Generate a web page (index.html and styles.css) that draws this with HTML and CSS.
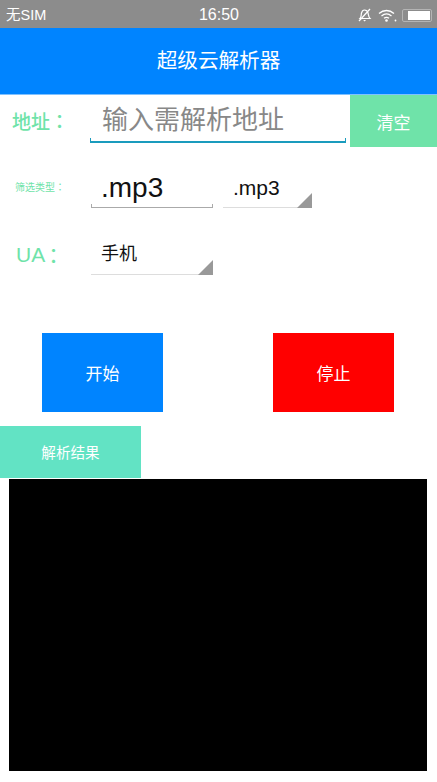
FILE: index.html
```html
<!DOCTYPE html>
<html>
	<head>
		<meta charset="UTF-8">
		<title>超级云解析器</title>
		<link rel="stylesheet" href="styles.css">
	</head>

	<body>
		<div class='status-bar'>
			<span class='carrier'>无SIM</span>
			<span class='clock'>16:50</span>
			<span class='status-icons'>
				<svg width='15' height='14' viewBox='0 0 15 14'>
					<path d='M3 10.5 C4.5 9 4 7 4.5 5 C5 3 6.5 2 7.5 2 C9 2 10.5 3 11 5 C11.5 7 11.5 9 13 10.5 Z' fill='none' stroke='#fff' stroke-width='1.2'/>
					<path d='M6.2 12 H9 L7.6 13.4 Z' fill='#fff'/>
					<path d='M2 13 L13 1' stroke='#fff' stroke-width='1.2'/>
				</svg>
				<svg class='wifi' width='19' height='13' viewBox='0 0 19 13'>
					<path d='M1 4.5 C5.5 .5 11.5 .5 16 4.5 M3.5 7 C6.5 4.5 10.5 4.5 13.5 7 M6 9.3 C7.5 8.1 9.5 8.1 11 9.3' fill='none' stroke='#fff' stroke-width='1.3'/>
					<circle cx='8.5' cy='11.5' r='1.3' fill='#fff'/>
					<circle cx='17.5' cy='11.5' r='.9' fill='#fff'/>
				</svg>
				<span class='battery'><span class='battery-level'></span></span>
			</span>
		</div>

		<div class='title-bar'>超级云解析器</div>

		<div class='address-row'>
			<label class='address-label'>地址<span class='colon'>：</span></label>
			<div class='address-input'>输入需解析地址</div>
			<button class='clear'>清空</button>
		</div>

		<div class='filter-row'>
			<label class='filter-label'>筛选类型<span class='colon'>：</span></label>
			<div class='filter-input'>.mp3</div>
			<div class='picker picker-small'>.mp3</div>
		</div>

		<div class='ua-row'>
			<label class='ua-label'>UA<span class='ua-colon'>：</span></label>
			<div class='picker picker-ua'>手机</div>
		</div>

		<div class='actions'>
			<button class='action start'>开始</button>
			<button class='action stop'>停止</button>
		</div>

		<div class='result-title'>解析结果</div>
		<div class='result'></div>
	</body>
</html>
```

FILE: styles.css
```css
* {
	box-sizing: border-box;
}

html, body {
	height: 100%;
}

body {
	margin: 0;
	background-color: #FFF;
	font-family: "Liberation Sans", "Noto Sans CJK SC", sans-serif;
	overflow: hidden;
}

button {
	border: none;
	color: white;
	font-family: inherit;
	padding: 0;
}

.colon {
	font-family: "Noto Sans CJK TC", sans-serif;
}

.status-bar {
	display: grid;
	grid-template-columns: 1fr auto 1fr;
	align-items: center;
	height: 28px;
	padding: 0 5px 0 6px;
	background-color: #8C8C8C;
	color: white;
	font-size: 15px;
	line-height: 28px;
}

.carrier {
	font-size: 14.5px;
	line-height: 28px;
}

.clock {
	font-size: 16px;
	line-height: 30px;
}

.status-icons {
	display: flex;
	align-items: center;
	justify-content: flex-end;
	gap: 5px;
}

.wifi {
	margin-left: 1px;
}

.battery {
	display: block;
	width: 30px;
	height: 13px;
	padding: 1px;
	border: 1px solid #B4B4B4;
	border-radius: 2px;
}

.battery-level {
	display: block;
	height: 100%;
	margin-left: 4px;
	background-color: white;
}

.title-bar {
	height: 67px;
	padding-bottom: 2px;
	border-bottom: 1px solid #7FC1FF;
	background-color: #0084FF;
	color: white;
	font-size: 20.6px;
	line-height: 65px;
	text-align: center;
}

.address-row {
	display: flex;
	height: 52px;
}

.address-label {
	width: 90px;
	padding-left: 12px;
	color: #6FE3A9;
	font-size: 19px;
	font-weight: 500;
	line-height: 52px;
}

.address-input {
	width: 256px;
	height: 48px;
	padding-left: 11px;
	border-bottom: 2px solid #1A9BBD;
	border-left: 1px solid #1A9BBD;
	border-right: 1px solid #1A9BBD;
	border-image: linear-gradient(to top, #1A9BBD 4px, transparent 4px) 1;
	color: #888;
	font-size: 26px;
	line-height: 50px;
}

.clear {
	width: 87px;
	margin-left: 4px;
	background-color: #6FE3A9;
	font-size: 17px;
}

.filter-row {
	display: flex;
	align-items: flex-end;
	height: 61px;
}

.filter-label {
	width: 91px;
	padding-left: 15px;
	padding-bottom: 14px;
	color: #6FE3A9;
	font-size: 10px;
}

.filter-input {
	width: 122px;
	height: 40px;
	padding-left: 9px;
	border-bottom: 1px solid #AAA;
	border-left: 1px solid #AAA;
	border-right: 1px solid #AAA;
	border-image: linear-gradient(to top, #AAA 4px, transparent 4px) 1;
	color: #111;
	font-size: 28px;
	line-height: 40px;
}

.picker {
	position: relative;
	border-bottom: 1px solid #DDD;
	color: #111;
}

.picker::after {
	content: '';
	position: absolute;
	right: 0;
	bottom: -1px;
	border-style: solid;
	border-width: 0 0 15px 15px;
	border-color: transparent transparent #999 transparent;
}

.picker-small {
	width: 89px;
	height: 40px;
	margin-left: 10px;
	padding-left: 10px;
	font-size: 21px;
	line-height: 39px;
}

.ua-row {
	display: flex;
	align-items: flex-end;
	height: 67px;
}

.ua-label {
	width: 91px;
	padding-left: 16px;
	padding-bottom: 7px;
	color: #6FE3A9;
	font-size: 21px;
}

.ua-colon {
	margin-left: 3px;
}

.picker-ua {
	width: 122px;
	height: 40px;
	padding-left: 10px;
	font-size: 18px;
	line-height: 38px;
}

.actions {
	display: flex;
	gap: 110px;
	padding: 58px 0 0 42px;
}

.action {
	width: 121px;
	height: 79px;
	font-size: 17px;
}

.start {
	background-color: #0084FF;
}

.stop {
	background-color: #FF0000;
}

.result-title {
	width: 141px;
	height: 52px;
	margin-top: 14px;
	background-color: #62E3C4;
	color: white;
	font-size: 14.6px;
	line-height: 54px;
	text-align: center;
}

.result {
	width: 418px;
	height: 292px;
	margin: 1px 0 0 9px;
	background-color: #000;
}
```
